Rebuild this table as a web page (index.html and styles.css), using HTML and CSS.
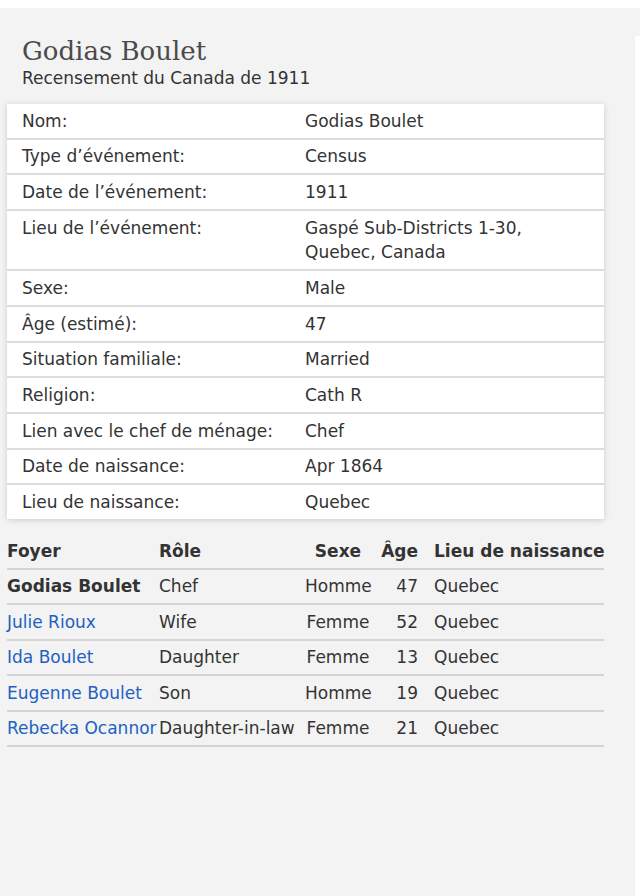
FILE: index.html
```html
<!DOCTYPE html>
<html lang="fr">
<head>
<meta charset="utf-8">
<title>Godias Boulet</title>
<link rel="stylesheet" href="styles.css">
</head>
<body>
<div class="page">
  <main class="main">
    <header class="head">
      <h1 class="title">Godias Boulet</h1>
      <p class="subtitle">Recensement du Canada de 1911</p>
    </header>
    <section class="card">
      <div class="row"><div class="label">Nom:</div><div class="value">Godias Boulet</div></div>
      <div class="row"><div class="label">Type d’événement:</div><div class="value">Census</div></div>
      <div class="row"><div class="label">Date de l’événement:</div><div class="value">1911</div></div>
      <div class="row"><div class="label">Lieu de l’événement:</div><div class="value">Gaspé Sub-Districts 1-30,<br>Quebec, Canada</div></div>
      <div class="row"><div class="label">Sexe:</div><div class="value">Male</div></div>
      <div class="row"><div class="label">Âge (estimé):</div><div class="value">47</div></div>
      <div class="row"><div class="label">Situation familiale:</div><div class="value">Married</div></div>
      <div class="row"><div class="label">Religion:</div><div class="value">Cath R</div></div>
      <div class="row"><div class="label">Lien avec le chef de ménage:</div><div class="value">Chef</div></div>
      <div class="row"><div class="label">Date de naissance:</div><div class="value">Apr 1864</div></div>
      <div class="row"><div class="label">Lieu de naissance:</div><div class="value">Quebec</div></div>
    </section>
    <table class="household">
      <colgroup>
        <col class="c-name"><col class="c-role"><col class="c-sex"><col class="c-age"><col class="c-place">
      </colgroup>
      <thead>
        <tr><th class="left">Foyer</th><th class="left">Rôle</th><th class="center">Sexe</th><th class="right">Âge</th><th class="left place">Lieu de naissance</th></tr>
      </thead>
      <tbody>
        <tr><td class="left strong">Godias Boulet</td><td class="left">Chef</td><td class="center">Homme</td><td class="right">47</td><td class="left place">Quebec</td></tr>
        <tr><td class="left"><a href="#">Julie Rioux</a></td><td class="left">Wife</td><td class="center">Femme</td><td class="right">52</td><td class="left place">Quebec</td></tr>
        <tr><td class="left"><a href="#">Ida Boulet</a></td><td class="left">Daughter</td><td class="center">Femme</td><td class="right">13</td><td class="left place">Quebec</td></tr>
        <tr><td class="left"><a href="#">Eugenne Boulet</a></td><td class="left">Son</td><td class="center">Homme</td><td class="right">19</td><td class="left place">Quebec</td></tr>
        <tr><td class="left"><a href="#">Rebecka Ocannor</a></td><td class="left">Daughter-in-law</td><td class="center">Femme</td><td class="right">21</td><td class="left place">Quebec</td></tr>
      </tbody>
    </table>
  </main>
  <div class="edge"></div>
</div>
</body>
</html>
```
FILE: styles.css
```css
html, body {
  margin: 0;
  padding: 0;
  background: #ffffff;
}
body {
  font-family: "DejaVu Sans", Verdana, sans-serif;
  color: #333333;
  font-size: 17px;
}
.page {
  margin-top: 8px;
  display: flex;
  min-height: 888px;
  background: #f3f3f3;
}
.main {
  width: 635px;
  background: #f3f3f3;
}
.edge {
  flex: 1;
  margin-top: 28px;
  background: #ffffff;
}
.head {
  padding: 28px 0 0 22px;
}
.title {
  margin: 0;
  font-family: "DejaVu Serif", Georgia, serif;
  font-weight: normal;
  font-size: 26px;
  line-height: 30px;
  color: #4a4a4a;
}
.subtitle {
  margin: 0;
  font-size: 17px;
  line-height: 24px;
  color: #333333;
}
.card {
  margin: 14px 0 0 7px;
  width: 597px;
  background: #ffffff;
  box-shadow: 0 1px 6px rgba(0, 0, 0, 0.16);
}
.row {
  display: grid;
  grid-template-columns: 283px 1fr;
  border-top: 2px solid #dcdcdc;
}
.row:first-child {
  border-top: none;
}
.label, .value {
  padding: 4.6px 0 4.6px 15px;
  line-height: 24.5px;
}
.household {
  margin: 15px 0 0 7px;
  width: 597px;
  border-collapse: collapse;
  table-layout: fixed;
}
.c-name { width: 152px; }
.c-role { width: 146px; }
.c-sex { width: 66px; }
.c-age { width: 47px; }
.household th, .household td {
  padding: 4.5px 0;
  line-height: 24.5px;
  white-space: nowrap;
  border-bottom: 2px solid #d4d4d4;
}
.household th {
  font-weight: bold;
  color: #333333;
}
.left { text-align: left; }
.center { text-align: center; }
.right { text-align: right; }
.place { padding-left: 16px !important; }
.strong { font-weight: bold; }
.household a {
  color: #1d61c2;
  text-decoration: none;
}
```
